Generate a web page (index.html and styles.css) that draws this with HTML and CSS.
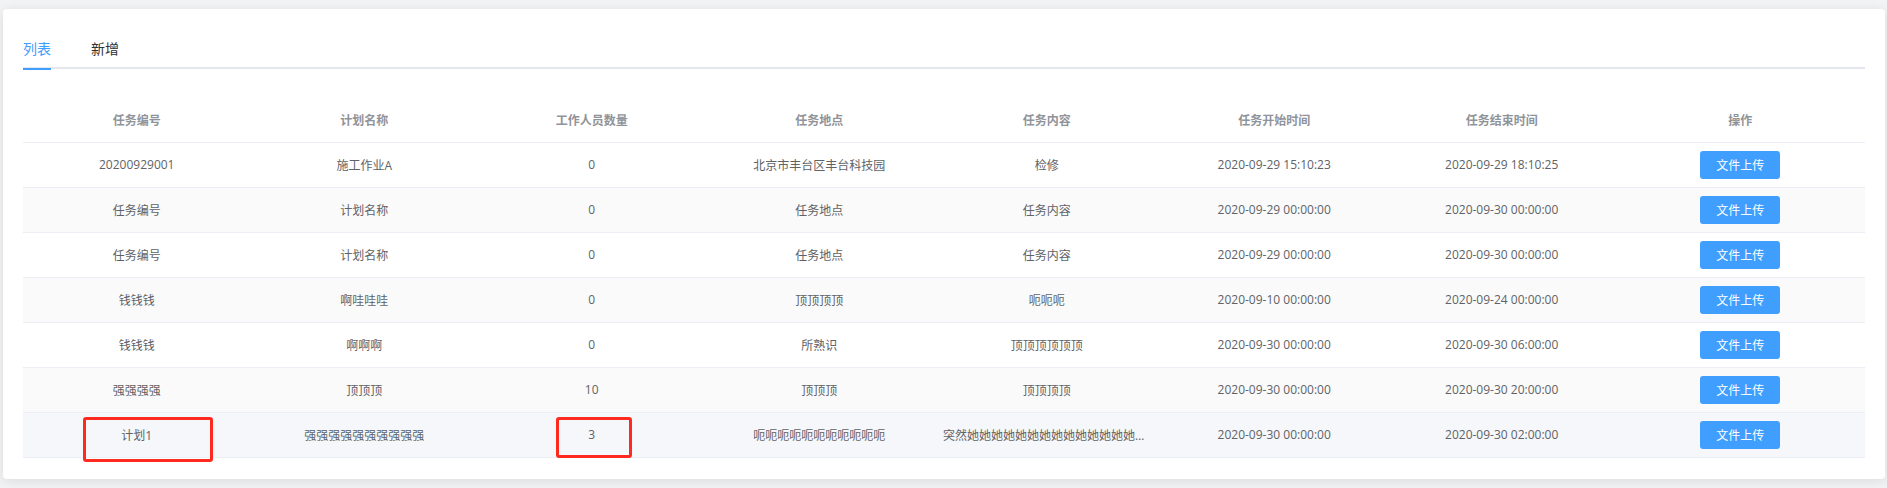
FILE: index.html
```html
<!DOCTYPE html>
<html lang="zh-CN">
<head>
<meta charset="utf-8">
<title>任务列表</title>
<link rel="stylesheet" href="styles.css">
</head>
<body>
<div class="page">
  <div class="card">
    <div class="tabs">
      <div class="tab active">列表</div>
      <div class="tab">新增</div>
    </div>
    <table class="grid">
      <colgroup>
        <col class="c"><col class="c"><col class="c"><col class="c"><col class="c"><col class="c"><col class="c"><col class="c-last">
      </colgroup>
      <thead>
        <tr>
          <th>任务编号</th><th>计划名称</th><th>工作人员数量</th><th>任务地点</th><th>任务内容</th><th>任务开始时间</th><th>任务结束时间</th><th>操作</th>
        </tr>
      </thead>
      <tbody>
        <tr>
          <td>20200929001</td><td>施工作业A</td><td>0</td><td>北京市丰台区丰台科技园</td><td>检修</td><td>2020-09-29 15:10:23</td><td>2020-09-29 18:10:25</td><td><button class="btn">文件上传</button></td>
        </tr>
        <tr class="stripe">
          <td>任务编号</td><td>计划名称</td><td>0</td><td>任务地点</td><td>任务内容</td><td>2020-09-29 00:00:00</td><td>2020-09-30 00:00:00</td><td><button class="btn">文件上传</button></td>
        </tr>
        <tr>
          <td>任务编号</td><td>计划名称</td><td>0</td><td>任务地点</td><td>任务内容</td><td>2020-09-29 00:00:00</td><td>2020-09-30 00:00:00</td><td><button class="btn">文件上传</button></td>
        </tr>
        <tr class="stripe">
          <td>钱钱钱</td><td>啊哇哇哇</td><td>0</td><td>顶顶顶顶</td><td>呃呃呃</td><td>2020-09-10 00:00:00</td><td>2020-09-24 00:00:00</td><td><button class="btn">文件上传</button></td>
        </tr>
        <tr>
          <td>钱钱钱</td><td>啊啊啊</td><td>0</td><td>所熟识</td><td>顶顶顶顶顶顶</td><td>2020-09-30 00:00:00</td><td>2020-09-30 06:00:00</td><td><button class="btn">文件上传</button></td>
        </tr>
        <tr class="stripe">
          <td>强强强强</td><td>顶顶顶</td><td>10</td><td>顶顶顶</td><td>顶顶顶顶</td><td>2020-09-30 00:00:00</td><td>2020-09-30 20:00:00</td><td><button class="btn">文件上传</button></td>
        </tr>
        <tr class="hover">
          <td class="mark-cell">计划1<span class="mark mark-a"></span></td>
          <td>强强强强强强强强强强</td>
          <td class="mark-cell">3<span class="mark mark-b"></span></td>
          <td>呃呃呃呃呃呃呃呃呃呃呃</td>
          <td class="ellip">突然她她她她她她她她她她她她她她她她她她她她她她</td>
          <td>2020-09-30 00:00:00</td><td>2020-09-30 02:00:00</td><td><button class="btn">文件上传</button></td>
        </tr>
      </tbody>
    </table>
  </div>
</div>
</body>
</html>
```

FILE: styles.css
```css
* { box-sizing: border-box; }
html, body { margin: 0; padding: 0; }
body {
  background: #f2f3f5;
  font-family: "Open Sans", "Noto Sans CJK SC", sans-serif;
  color: #606266;
}
.page {
  padding: 9px 2px 10px 3px;
}
.card {
  background: #ffffff;
  border-radius: 4px;
  box-shadow: 0 2px 12px rgba(0, 0, 0, 0.1);
  padding: 20px 20px 21px 20px;
}
.tabs {
  display: flex;
  height: 40px;
  align-items: center;
  border-bottom: 2px solid #e4e7ed;
  margin-bottom: 28px;
}
.tab {
  position: relative;
  font-size: 14px;
  line-height: 40px;
  height: 40px;
  padding: 0 20px;
  color: #303133;
  font-family: "Noto Sans CJK SC", sans-serif;
}
.tab:first-child { padding-left: 0; }
.tab.active { color: #409eff; }
.tab.active::after {
  content: "";
  position: absolute;
  left: 0;
  right: 20px;
  bottom: -2px;
  height: 2px;
  background: #409eff;
}
.grid {
  width: 100%;
  border-collapse: collapse;
  table-layout: fixed;
  font-size: 12px;
}
.grid col.c { width: 12.35%; }
.grid col.c-last { width: 13.55%; }
.grid th, .grid td {
  height: 45px;
  padding: 0 10px;
  text-align: center;
  vertical-align: middle;
  border-bottom: 1px solid #ebeef5;
  white-space: nowrap;
  overflow: hidden;
}
.grid th {
  color: #909399;
  font-weight: bold;
  font-family: "Noto Sans CJK SC", sans-serif;
}
.grid td { color: #606266; }
.grid tr.stripe td { background: #fafafa; }
.grid tr.hover td { background: #f5f7fa; }
.grid td.ellip {
  text-overflow: ellipsis;
}
.btn {
  width: 80px;
  height: 28px;
  border: none;
  border-radius: 3px;
  background: #409eff;
  color: #ffffff;
  font-size: 12px;
  font-family: "Noto Sans CJK SC", sans-serif;
  padding: 0;
  cursor: pointer;
}
.mark-cell {
  position: relative;
  overflow: visible !important;
}
.mark {
  position: absolute;
  border: 3px solid #ff2a1f;
  border-radius: 3px;
}
.mark-a {
  left: 60px;
  top: 4px;
  width: 130px;
  height: 45px;
}
.mark-b {
  left: 78px;
  top: 4px;
  width: 76px;
  height: 41px;
}
```
